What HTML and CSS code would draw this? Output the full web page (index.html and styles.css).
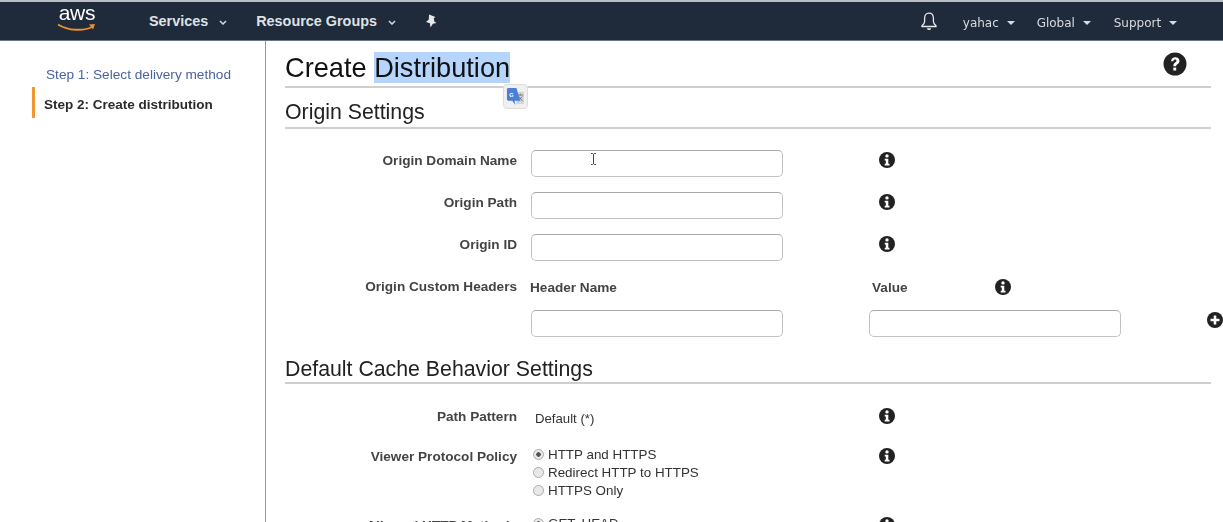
FILE: index.html
```html
<!DOCTYPE html>
<html lang="en">
<head>
    <meta charset="UTF-8">
    <title>Create Distribution</title>
    <link rel="stylesheet" href="styles.css">
</head>
<body>
    <svg class="icon-defs" width="0" height="0">
        <symbol id="info" viewBox="0 0 16 16">
            <circle cx="8" cy="8" r="8" fill="#222"/>
            <circle cx="8" cy="3.9" r="1.7" fill="#fff"/>
            <path d="M5.7 6.8h3.6v5h1.2v1.7H5.7v-1.7h1.1V8.5H5.7z" fill="#fff"/>
        </symbol>
    </svg>

    <header class="navbar">
        <a class="logo">
            <span class="logo-text">aws</span>
            <svg class="logo-smile" width="40" height="10" viewBox="0 0 40 10">
                <path d="M1 1.5C11 8 27 8.5 36 3.5" fill="none" stroke="#e8912d" stroke-width="2"/>
                <path d="M32 1.5l6-.5-2 5.5z" fill="#e8912d"/>
            </svg>
        </a>
        <a class="nav-item services">Services
            <svg class="chevron" width="8" height="5" viewBox="0 0 8 5"><path d="M1 1l3 3 3-3" fill="none" stroke="#d5d9de" stroke-width="1.5"/></svg>
        </a>
        <a class="nav-item groups">Resource Groups
            <svg class="chevron" width="8" height="5" viewBox="0 0 8 5"><path d="M1 1l3 3 3-3" fill="none" stroke="#d5d9de" stroke-width="1.5"/></svg>
        </a>
        <svg class="pin" width="13" height="14" viewBox="0 0 13 14">
            <path d="M4 .5l6.500 2.500-1.700 1.200.5 3.300 2.200 1.500-3.600.7-2.400 3.800-.6-4.200L1 8l2.800-2.400z" fill="#e6e8ea"/>
        </svg>
        <div class="nav-right">
            <svg class="bell" width="16" height="19" viewBox="0 0 16 19">
                <path d="M8 1.200c-3 0-4.400 2.300-4.400 5v3.200c0 1.700-1.200 3-2.600 4.300v.8h14v-.8c-1.400-1.300-2.600-2.600-2.600-4.300V6.200c0-2.700-1.400-5-4.400-5z" fill="none" stroke="#e6e8ea" stroke-width="1.300"/>
                <path d="M5.800 16.200h4.400c-.3 1.200-1.200 1.900-2.200 1.900s-1.900-.7-2.200-1.900z" fill="#e6e8ea"/>
            </svg>
            <a class="nav-small user">yahac <span class="caret"></span></a>
            <a class="nav-small region">Global <span class="caret"></span></a>
            <a class="nav-small support">Support <span class="caret"></span></a>
        </div>
    </header>

    <div class="page">
        <aside class="sidebar">
            <a class="step-link">Step 1: Select delivery method</a>
            <div class="step-current">Step 2: Create distribution</div>
        </aside>

        <main class="content">
            <div class="title-bar">
                <h1>Create <span class="selected">Distribution</span></h1>
                <svg class="help" width="24" height="24" viewBox="0 0 24 24">
                    <circle cx="12" cy="12" r="11.500" fill="#222"/>
                    <path d="M8 9.300C8.300 6.700 10 5.300 12.300 5.300c2.500 0 4.200 1.500 4.200 3.600 0 1.700-1 2.500-2.100 3.300-.9.6-1.200 1-1.200 2h-2.900c0-1.900.6-2.800 1.800-3.700.9-.7 1.400-1 1.400-1.700 0-.7-.6-1.200-1.400-1.200-.9 0-1.500.6-1.700 1.700z" fill="#fff"/>
                    <rect x="10.300" y="15.600" width="2.900" height="2.900" fill="#fff"/>
                </svg>
            </div>

            <div class="translate-bubble">
                <svg width="19" height="19" viewBox="0 0 20 20">
                    <path d="M10 5h9v12a1 1 0 0 1-1 1h-7z" fill="#d4d6d8"/>
                    <path d="M12 8.500h6M15 7v1.500M13 15l4-5M13.500 10l4 5" fill="none" stroke="#777" stroke-width="1"/>
                    <path d="M1 2.500A1.500 1.500 0 0 1 2.500 1h8.500l4 13.500H9l1 4.500-3.500-4.500h-4A1.500 1.500 0 0 1 1 13z" fill="#4a80d8"/>
                    <text x="3.500" y="10.500" class="translate-g">G</text>
                </svg>
            </div>

            <h2 class="section-title first">Origin Settings</h2>

            <div class="form-row row-domain">
                <label class="field-label">Origin Domain Name</label>
                <div class="field">
                    <input class="text-input" type="text">
                    <svg class="ibeam" width="7" height="12" viewBox="0 0 7 12"><path d="M1 .5h1.500l1 .8 1-.8H6M3.500 1.300v9.400M1 11.500h1.500l1-.8 1 .8H6" fill="none" stroke="#444" stroke-width="1"/></svg>
                </div>
                <svg class="info"><use href="#info"/></svg>
            </div>
            <div class="form-row">
                <label class="field-label">Origin Path</label>
                <div class="field"><input class="text-input" type="text"></div>
                <svg class="info"><use href="#info"/></svg>
            </div>
            <div class="form-row">
                <label class="field-label">Origin ID</label>
                <div class="field"><input class="text-input" type="text"></div>
                <svg class="info"><use href="#info"/></svg>
            </div>

            <div class="header-labels">
                <label class="field-label">Origin Custom Headers</label>
                <span class="col-name">Header Name</span>
                <span class="col-value">Value</span>
                <svg class="info"><use href="#info"/></svg>
            </div>
            <div class="header-inputs">
                <div class="field"><input class="text-input" type="text"></div>
                <div class="field value-field"><input class="text-input" type="text"></div>
                <svg class="add" width="16" height="16" viewBox="0 0 16 16">
                    <circle cx="8" cy="8" r="8" fill="#222"/>
                    <path d="M6.700 3.500h2.600v3.200h3.200v2.600H9.300v3.200H6.700V9.300H3.500V6.700h3.200z" fill="#fff"/>
                </svg>
            </div>

            <h2 class="section-title second">Default Cache Behavior Settings</h2>

            <div class="plain-row row-path">
                <label class="field-label">Path Pattern</label>
                <span class="plain-value">Default (*)</span>
                <svg class="info"><use href="#info"/></svg>
            </div>
            <div class="plain-row row-viewer">
                <label class="field-label">Viewer Protocol Policy</label>
                <div class="radio-group">
                    <label class="radio-line"><input class="radio" type="radio" name="viewer" checked>HTTP and HTTPS</label>
                    <label class="radio-line"><input class="radio" type="radio" name="viewer">Redirect HTTP to HTTPS</label>
                    <label class="radio-line"><input class="radio" type="radio" name="viewer">HTTPS Only</label>
                </div>
                <svg class="info"><use href="#info"/></svg>
            </div>
            <div class="plain-row row-methods">
                <label class="field-label">Allowed HTTP Methods</label>
                <div class="radio-group">
                    <label class="radio-line"><input class="radio" type="radio" name="methods" checked>GET, HEAD</label>
                </div>
                <svg class="info"><use href="#info"/></svg>
            </div>
        </main>
    </div>
</body>
</html>
```

FILE: styles.css
```css
html, body {
    margin: 0;
    height: 522px;
    overflow: hidden;
}
body {
    font-family: "Liberation Sans", Arial, sans-serif;
    background-color: #fff;
    color: #222;
    filter: blur(0.35px);
}
.icon-defs {
    display: block;
    height: 0;
}

/* top bar */
.navbar {
    display: flex;
    align-items: center;
    height: 38px;
    border-top: 2px solid #b9bec4;
    border-bottom: 1px solid #6d7681;
    background-color: #1f2a3a;
    color: #e6e8ea;
}
.logo {
    position: relative;
    width: 40px;
    height: 34px;
    margin-left: 57px;
}
.logo-text {
    display: block;
    font-size: 21px;
    line-height: 24px;
    letter-spacing: -0.2px;
    color: #fff;
    text-align: center;
    margin-top: -3px;
}
.logo-smile {
    display: block;
    margin-top: -2px;
}
.nav-item {
    font-size: 14.4px;
    font-weight: bold;
    color: #dfe2e5;
    white-space: nowrap;
}
.services {
    margin-left: 52px;
}
.groups {
    margin-left: 29px;
}
.chevron {
    margin-left: 7px;
    vertical-align: 1px;
}
.pin {
    margin-left: 29px;
}
.nav-right {
    display: flex;
    align-items: center;
    margin-left: auto;
    margin-right: 46px;
}
.bell {
    margin-right: 26px;
}
.nav-small {
    font-family: "DejaVu Sans", Verdana, sans-serif;
    font-size: 12px;
    color: #d9dcdf;
    white-space: nowrap;
    margin-top: 4px;
}
.region {
    margin-left: 22px;
}
.support {
    margin-left: 23px;
}
.caret {
    display: inline-block;
    width: 0;
    height: 0;
    margin-left: 4px;
    vertical-align: 2px;
    border-left: 4px solid transparent;
    border-right: 4px solid transparent;
    border-top: 4px solid #d9dcdf;
}

/* page */
.page {
    display: flex;
    height: 481px;
}
.sidebar {
    flex: 0 0 266px;
    box-sizing: border-box;
    border-right: 1px solid #999;
    padding-top: 26px;
}
.step-link {
    display: block;
    margin-left: 46px;
    font-size: 13.65px;
    line-height: 16px;
    color: #4b62a0;
}
.step-current {
    margin: 4px 0 0 32px;
    padding: 10px 0 5px 9px;
    border-left: 3px solid #f0982f;
    font-size: 13.5px;
    font-weight: bold;
    line-height: 16px;
    color: #2b2b2b;
}
.content {
    position: relative;
    flex: 1;
    padding-left: 19px;
}

.title-bar {
    display: flex;
    align-items: flex-start;
    justify-content: space-between;
    height: 45px;
    margin-right: 12px;
    border-bottom: 2px solid #cfcfcf;
}
.title-bar h1 {
    margin: 11px 0 0;
    font-size: 27.2px;
    font-weight: normal;
    line-height: 32px;
    color: #111;
}
.selected {
    background-color: #b5d5fd;
}
.help {
    margin: 11px 24px 0 0;
}
.translate-bubble {
    position: absolute;
    left: 237px;
    top: 43px;
    box-sizing: border-box;
    width: 25px;
    height: 25px;
    padding: 2px;
    background-color: #f0f0f0;
    border: 1px solid #ddd;
    border-radius: 4px;
}
.translate-g {
    font-size: 6px;
    font-weight: bold;
    fill: #fff;
}

.section-title {
    margin: 0 12px 0 0;
    font-size: 21.3px;
    font-weight: normal;
    line-height: 26px;
    color: #222;
    border-bottom: 2px solid #cfcfcf;
}
.section-title.first {
    padding: 11px 0 2px;
}
.section-title.second {
    margin-top: 19px;
}

.form-row,
.plain-row {
    display: flex;
    align-items: flex-start;
}
.form-row {
    margin-top: 15px;
    height: 27px;
}
.row-domain {
    margin-top: 21px;
}
.form-row .info {
    margin-top: 2px;
}
.field-label {
    flex: 0 0 232px;
    font-size: 13.6px;
    font-weight: bold;
    line-height: 20px;
    color: #444;
    text-align: right;
    white-space: nowrap;
}
.form-row .field-label {
    padding-top: 1px;
}
.field {
    position: relative;
    flex: 0 0 252px;
    margin-left: 14px;
    height: 27px;
}
.text-input {
    display: block;
    box-sizing: border-box;
    width: 100%;
    height: 100%;
    padding: 0 8px;
    border: 1px solid #c2c2c2;
    border-top-color: #a8a8a8;
    border-radius: 5px;
    background-color: #fff;
    outline: none;
}
.ibeam {
    position: absolute;
    left: 59px;
    top: 3px;
}
.info {
    flex: 0 0 16px;
    width: 16px;
    height: 16px;
    margin-left: 96px;
}

.header-labels {
    display: flex;
    align-items: center;
    height: 20px;
    margin-top: 16px;
}
.col-name {
    flex: 0 0 342px;
    margin-left: 13px;
    font-size: 13.6px;
    font-weight: bold;
    color: #444;
}
.col-value {
    flex: 0 0 32px;
    font-size: 13.6px;
    font-weight: bold;
    color: #444;
}
.header-labels .info {
    margin-left: 87px;
}
.header-inputs {
    display: flex;
    align-items: flex-start;
    margin-top: 13px;
    padding-left: 232px;
}
.value-field {
    margin-left: 86px;
}
.add {
    flex: 0 0 16px;
    margin: 2px 0 0 86px;
}

.row-path {
    margin-top: 23px;
}
.row-path .info {
    margin-left: 0;
    margin-top: 1px;
}
.plain-value {
    flex: 0 0 362px;
    box-sizing: border-box;
    padding: 1px 0 0 18px;
    font-size: 13.2px;
    line-height: 22px;
    color: #333;
}
.row-viewer {
    margin-top: 17px;
}
.row-methods {
    margin-top: 17px;
}
.radio-group {
    flex: 0 0 362px;
    box-sizing: border-box;
    margin-top: -2px;
    padding-left: 16px;
}
.radio-group + .info {
    margin-left: 0;
    margin-top: 1px;
}
.radio-line {
    display: flex;
    align-items: center;
    height: 18px;
    font-size: 13.4px;
    color: #333;
}
.radio {
    appearance: none;
    box-sizing: border-box;
    flex: 0 0 11px;
    width: 11px;
    height: 11px;
    margin: 0 4px 0 0;
    border: 1px solid #aaa;
    border-radius: 50%;
    background-color: #e8e8e8;
}
.radio:checked {
    background: radial-gradient(circle, #555 0 2px, #e8e8e8 2.5px);
}
```
